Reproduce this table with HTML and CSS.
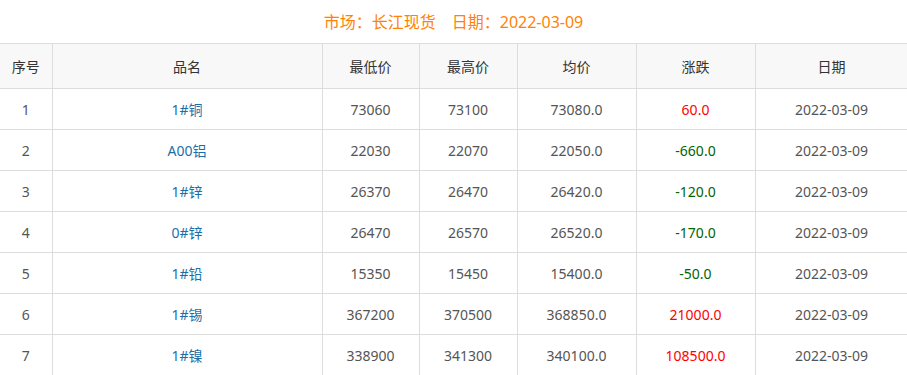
FILE: index.html
```html
<!DOCTYPE html>
<html lang="zh">
<head>
<meta charset="utf-8">
<link rel="stylesheet" href="styles.css">
</head>
<body>
<div class="title">市场：长江现货　日期：2022-03-09</div>
<table class="grid">
  <colgroup>
    <col class="c1"><col class="c2"><col class="c3"><col class="c4"><col class="c5"><col class="c6"><col class="c7">
  </colgroup>
  <thead>
    <tr><th>序号</th><th>品名</th><th>最低价</th><th>最高价</th><th>均价</th><th>涨跌</th><th>日期</th></tr>
  </thead>
  <tbody>
    <tr><td>1</td><td class="name">1#铜</td><td>73060</td><td>73100</td><td>73080.0</td><td class="up">60.0</td><td>2022-03-09</td></tr>
    <tr><td>2</td><td class="name">A00铝</td><td>22030</td><td>22070</td><td>22050.0</td><td class="down">-660.0</td><td>2022-03-09</td></tr>
    <tr><td>3</td><td class="name">1#锌</td><td>26370</td><td>26470</td><td>26420.0</td><td class="down">-120.0</td><td>2022-03-09</td></tr>
    <tr><td>4</td><td class="name">0#锌</td><td>26470</td><td>26570</td><td>26520.0</td><td class="down">-170.0</td><td>2022-03-09</td></tr>
    <tr><td>5</td><td class="name">1#铅</td><td>15350</td><td>15450</td><td>15400.0</td><td class="down">-50.0</td><td>2022-03-09</td></tr>
    <tr><td>6</td><td class="name">1#锡</td><td>367200</td><td>370500</td><td>368850.0</td><td class="up">21000.0</td><td>2022-03-09</td></tr>
    <tr><td>7</td><td class="name">1#镍</td><td>338900</td><td>341300</td><td>340100.0</td><td class="up">108500.0</td><td>2022-03-09</td></tr>
  </tbody>
</table>
</body>
</html>
```
FILE: styles.css
```css
html, body {
  margin: 0;
  padding: 0;
  background: #fff;
  overflow: hidden;
}
body {
  font-family: "Noto Sans", "Noto Sans CJK SC", sans-serif;
  color: #555;
  font-size: 14px;
}
.title {
  height: 43px;
  line-height: 44px;
  text-align: center;
  color: #ff8205;
  font-size: 16px;
}
.grid {
  border-collapse: collapse;
  table-layout: fixed;
  width: 908px;
}
.c1 { width: 52px; }
.c2 { width: 270px; }
.c3 { width: 97px; }
.c4 { width: 98px; }
.c5 { width: 119px; }
.c6 { width: 119px; }
.c7 { width: 153px; }
.grid th, .grid td {
  border: 1px solid #ddd;
  text-align: center;
  padding: 0;
  font-weight: normal;
}
.grid th:first-child, .grid td:first-child {
  border-left: none;
}
.grid th {
  background: #f8f8f8;
  height: 44px;
  color: #333;
}
.grid td {
  height: 40px;
  color: #555;
}
.grid td.name { color: #1b6fa8; }
.grid td.up { color: #ff0000; }
.grid td.down { color: #006600; }
```
